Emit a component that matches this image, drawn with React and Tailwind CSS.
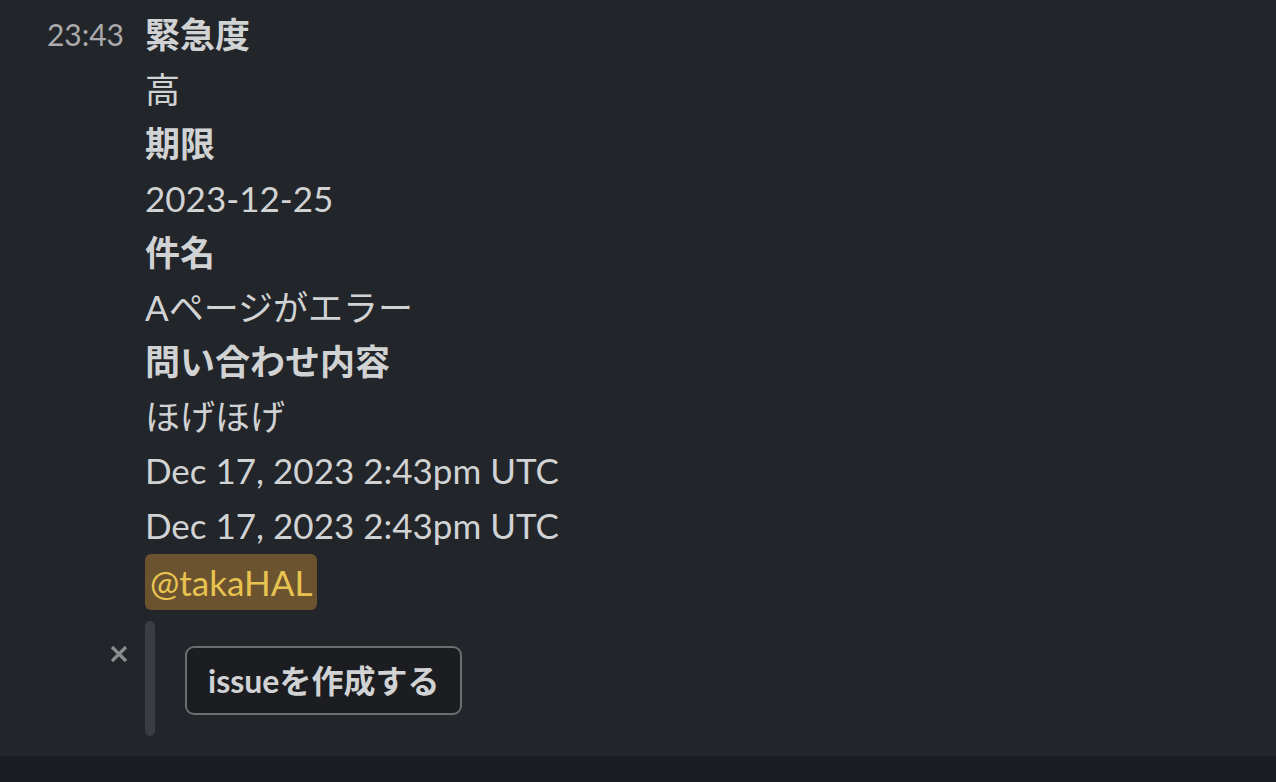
import React from "react";

const rows = [
  { text: "緊急度", bold: true },
  { text: "高" },
  { text: "期限", bold: true },
  { text: "2023-12-25" },
  { text: "件名", bold: true },
  { text: "Aページがエラー" },
  { text: "問い合わせ内容", bold: true },
  { text: "ほげほげ" },
  { text: "Dec 17, 2023 2:43pm UTC" },
  { text: "Dec 17, 2023 2:43pm UTC" },
];

export default function App() {
  return (
    <div
      className="w-full h-[782px] bg-[#222529] flex flex-col overflow-hidden"
      style={{ fontFamily: 'Lato, "Noto Sans CJK JP", sans-serif' }}
    >
      {/* ---------- message ---------- */}
      <div className="flex pt-[7px] flex-1">
        <div className="w-[145px] shrink-0 pr-[21px] flex justify-end">
          <span className="text-[30px] leading-[54.5px] text-[#ababad]">23:43</span>
        </div>

        <div className="flex flex-col text-[35px] leading-[54.5px] text-[#d1d2d3]">
          {rows.map((r, i) => (
            <div key={i} className={r.bold ? "font-bold" : ""}>
              {r.text}
            </div>
          ))}
          <div className="pt-[2px]">
            <span className="inline-block bg-[#6b5330] text-[#e8c350] rounded-[6px] px-[5px] leading-[56px]">
              @takaHAL
            </span>
          </div>
        </div>
      </div>

      {/* ---------- attachment ---------- */}
      <div className="flex h-[146px] pt-[11px]">
        <div className="w-[145px] shrink-0 flex justify-end pr-[17px] pt-[24px]">
          <svg width="18" height="18" viewBox="0 0 18 18" className="text-[#8a8b8d]">
            <path d="M2 2 L16 16 M16 2 L2 16" stroke="currentColor" strokeWidth="3.2" />
          </svg>
        </div>
        <div className="w-[10px] h-[115px] rounded-full bg-[#3b3d42]" />
        <div className="pl-[30px] pt-[25px]">
          <button className="h-[69px] px-[21px] border-2 border-[#6b6d70] bg-[#1b1d21] rounded-[9px] text-[32px] font-bold text-[#d1d2d3]">
            issueを作成する
          </button>
        </div>
      </div>

      <div className="h-[26px] bg-[#1a1d21]" />
    </div>
  );
}
